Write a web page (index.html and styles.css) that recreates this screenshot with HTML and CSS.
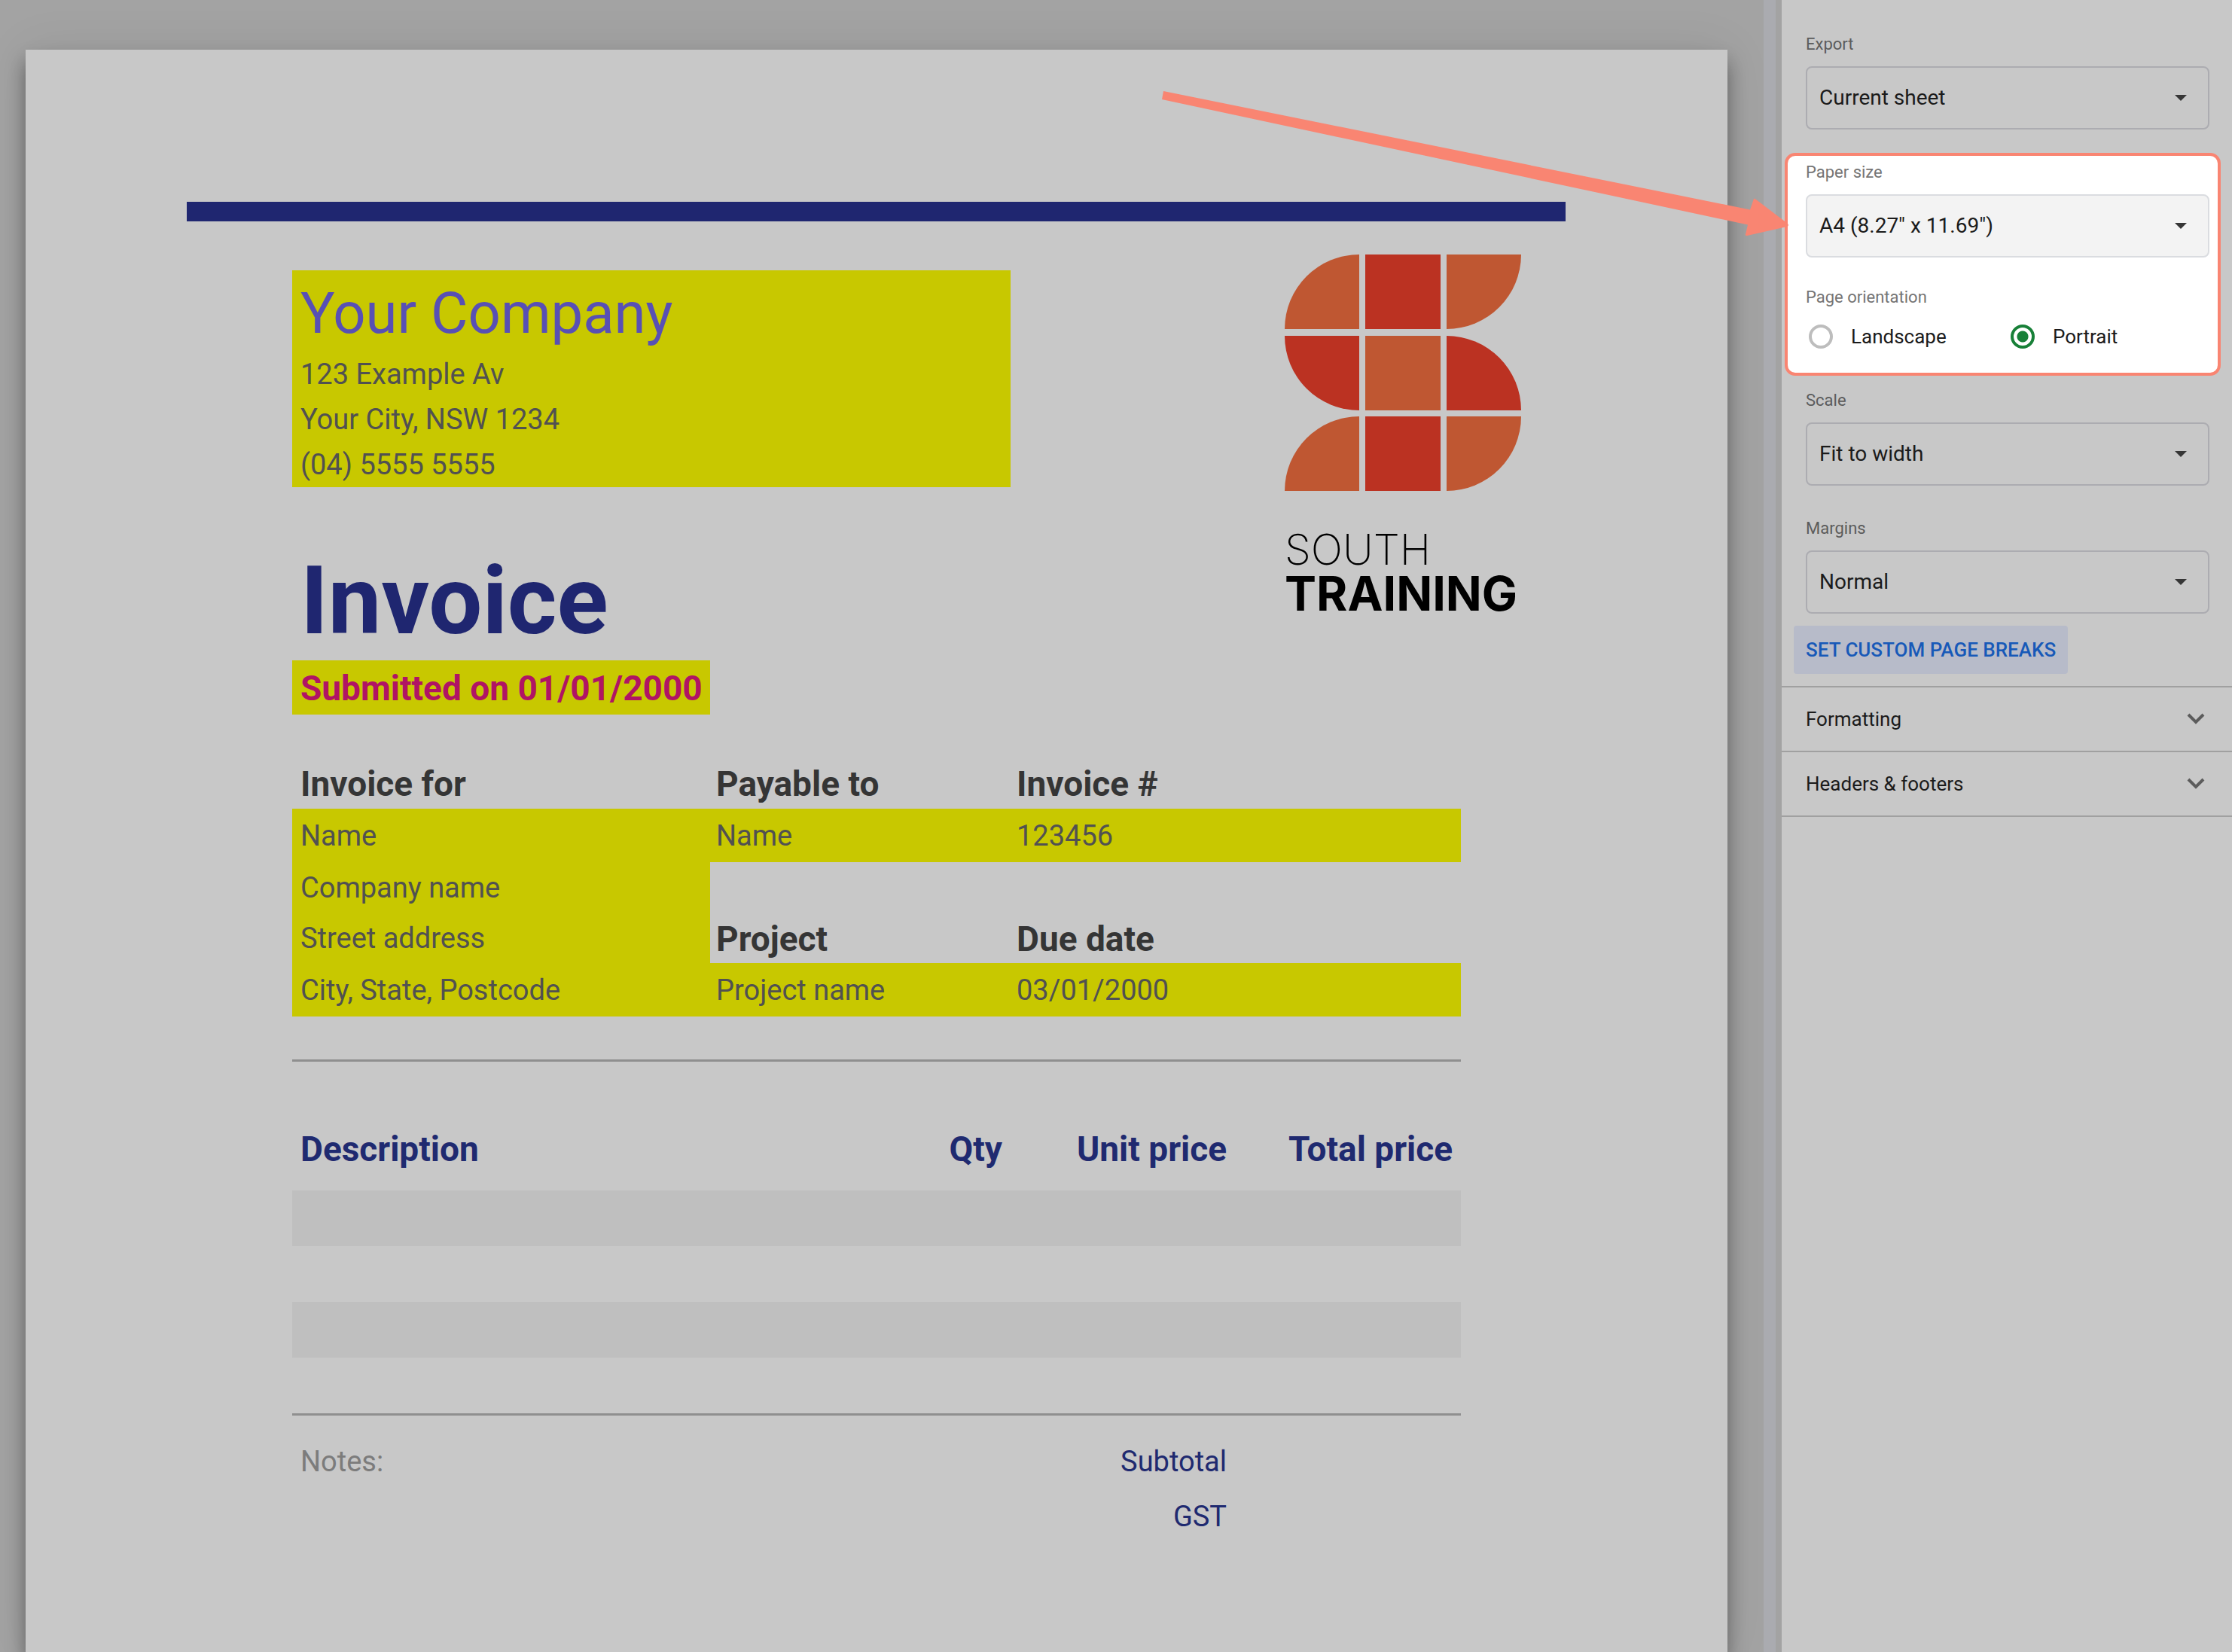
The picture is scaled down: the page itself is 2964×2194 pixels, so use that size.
FILE: index.html
```html
<!DOCTYPE html>
<html lang="en">
<head>
<meta charset="utf-8">
<title>Print settings</title>
<link rel="stylesheet" href="styles.css">
</head>
<body>
<div class="app">
  <main class="preview">
    <article class="sheet">
      <div class="sheet-bar"></div>
      <header class="sheet-head">
        <div class="head-text">
          <address class="company">
            <strong class="company-name">Your Company</strong>
            <span>123 Example Av</span>
            <span>Your City, NSW 1234</span>
            <span>(04) 5555 5555</span>
          </address>
          <h1 class="title">Invoice</h1>
          <p class="submitted">Submitted on 01/01/2000</p>
        </div>
        <div class="brand">
          <svg class="brand-mark" viewBox="0 0 314 314" aria-hidden="true">
            <g fill="#bf5732">
              <path d="M99 0V99H0A99 99 0 0 1 99 0Z"/>
              <path d="M215 0H314A99 99 0 0 1 215 99Z"/>
              <path d="M107 108H207V207H107Z"/>
              <path d="M99 215V314H0A99 99 0 0 1 99 215Z"/>
              <path d="M215 215H314A99 99 0 0 1 215 314Z"/>
            </g>
            <g fill="#bb3222">
              <path d="M107 0H207V99H107Z"/>
              <path d="M0 108H99V207A99 99 0 0 1 0 108Z"/>
              <path d="M215 108A99 99 0 0 1 314 207H215Z"/>
              <path d="M107 215H207V314H107Z"/>
            </g>
          </svg>
          <div class="brand-light">SOUTH</div>
          <div class="brand-bold">TRAINING</div>
        </div>
      </header>

      <div class="sheet-body">
        <table class="details">
          <colgroup><col class="col-a"><col class="col-b"><col></colgroup>
          <tr class="top"><th>Invoice for</th><th>Payable to</th><th>Invoice #</th></tr>
          <tr class="tall"><td class="mark">Name</td><td class="mark">Name</td><td class="mark">123456</td></tr>
          <tr><td class="mark">Company name</td><td></td><td></td></tr>
          <tr><td class="mark">Street address</td><th>Project</th><th>Due date</th></tr>
          <tr class="tall"><td class="mark">City, State, Postcode</td><td class="mark">Project name</td><td class="mark">03/01/2000</td></tr>
        </table>

        <table class="items">
          <colgroup><col class="col-a"><col class="col-b"><col class="col-c"><col></colgroup>
          <thead>
            <tr><th>Description</th><th>Qty</th><th>Unit price</th><th>Total price</th></tr>
          </thead>
          <tbody>
            <tr><td></td><td></td><td></td><td></td></tr>
            <tr><td></td><td></td><td></td><td></td></tr>
            <tr><td></td><td></td><td></td><td></td></tr>
            <tr><td></td><td></td><td></td><td></td></tr>
          </tbody>
          <tfoot>
            <tr class="first"><td class="notes">Notes:</td><td></td><td>Subtotal</td><td></td></tr>
            <tr><td></td><td></td><td>GST</td><td></td></tr>
          </tfoot>
        </table>
      </div>
    </article>
  </main>

  <div class="scroll-track"></div>

  <aside class="panel">
    <div class="field">
      <label class="caption" for="export">Export</label>
      <div class="select">
        <select id="export"><option>Current sheet</option></select>
        <svg class="caret" viewBox="0 0 16 8" aria-hidden="true"><path d="M0 0H16L8 8Z"/></svg>
      </div>
    </div>

    <div class="spotlight">
      <div class="field">
        <label class="caption" for="paper">Paper size</label>
        <div class="select filled">
          <select id="paper"><option>A4 (8.27" x 11.69")</option></select>
          <svg class="caret" viewBox="0 0 16 8" aria-hidden="true"><path d="M0 0H16L8 8Z"/></svg>
        </div>
      </div>
      <div class="orientation" role="radiogroup" aria-labelledby="orientation-caption">
        <div class="caption" id="orientation-caption">Page orientation</div>
        <div class="radios">
          <label class="radio"><input type="radio" name="orientation">Landscape</label>
          <label class="radio"><input type="radio" name="orientation" checked>Portrait</label>
        </div>
      </div>
      <svg class="pointer" viewBox="0 0 834 194" aria-hidden="true"><path d="M4 1L783 158.500L788 144Q789 143 791 145L833 177Q835 180 832 181L779 193Q776 193 777 191L780 178.500L2 12Z"/></svg>
    </div>

    <div class="field">
      <label class="caption" for="scale">Scale</label>
      <div class="select">
        <select id="scale"><option>Fit to width</option></select>
        <svg class="caret" viewBox="0 0 16 8" aria-hidden="true"><path d="M0 0H16L8 8Z"/></svg>
      </div>
    </div>

    <div class="field margins">
      <label class="caption" for="margins">Margins</label>
      <div class="select">
        <select id="margins"><option>Normal</option></select>
        <svg class="caret" viewBox="0 0 16 8" aria-hidden="true"><path d="M0 0H16L8 8Z"/></svg>
      </div>
    </div>

    <button class="breaks" type="button">SET CUSTOM PAGE BREAKS</button>

    <div class="sections">
      <button class="section" type="button">Formatting
        <svg class="chevron" viewBox="0 0 24 16" aria-hidden="true"><path d="M2 2L12 12L22 2"/></svg>
      </button>
      <button class="section" type="button">Headers &amp; footers
        <svg class="chevron" viewBox="0 0 24 16" aria-hidden="true"><path d="M2 2L12 12L22 2"/></svg>
      </button>
    </div>
  </aside>
</div>
</body>
</html>
```
FILE: styles.css
```css
* {
  box-sizing: border-box;
}

body {
  margin: 0;
  font-family: Roboto, "Liberation Sans", sans-serif;
  color: #1b1b1b;
  background: #a3a3a3;
}

.app {
  display: flex;
  min-height: 100vh;
}

/* Print preview */

.preview {
  display: flex;
  flex: 1;
  min-width: 0;
  padding: 66px 48px 0 34px;
  overflow: hidden;
}

.sheet {
  flex: 1;
  padding-top: 202px;
  background: #c8c8c8;
  box-shadow: 0 16px 24px rgba(0, 0, 0, 0.38), 0 0 60px rgba(0, 0, 0, 0.08);
}

.sheet-bar {
  height: 26px;
  margin: 0 215px 0 214px;
  background: #1f2670;
}

.sheet-head {
  display: flex;
  justify-content: space-between;
  align-items: flex-start;
  padding: 44px 272px 0 354px;
}

.head-text {
  padding-top: 21px;
}

.company {
  display: flex;
  flex-direction: column;
  width: 954px;
  padding: 6px 11px 0;
  font-size: 38px;
  font-style: normal;
  line-height: 60px;
  color: #515151;
  background: #c8c800;
}

.company-name {
  font-size: 76px;
  font-weight: 400;
  line-height: 102px;
  color: #5850b4;
}

.title {
  margin: 81px 0 9px;
  padding-left: 11px;
  font-size: 126px;
  line-height: 140px;
  color: #1f2670;
}

.submitted {
  width: 555px;
  margin: 0;
  padding: 2px 0 0 11px;
  font-size: 46px;
  font-weight: 700;
  line-height: 70px;
  color: #b01464;
  background: #c8c800;
}

.brand {
  width: 316px;
  font-family: Inter, "Liberation Sans", sans-serif;
  color: #000;
}

.brand-mark {
  display: block;
  width: 314px;
  height: 314px;
  margin-bottom: 48px;
}

.brand-light {
  font-size: 56px;
  font-weight: 200;
  line-height: 60px;
}

.brand-bold {
  font-size: 63px;
  font-weight: 700;
  line-height: 56px;
}

.sheet-body {
  padding: 57px 354px 0;
}

.details,
.items {
  width: 100%;
  border-spacing: 0;
  table-layout: fixed;
  font-size: 38px;
}

.col-a {
  width: 555px;
}

.col-b {
  width: 399px;
}

.col-c {
  width: 298px;
}

.details th,
.details td,
.items th,
.items td {
  padding: 0 11px;
  line-height: 60px;
  text-align: left;
}

.details tr {
  height: 67px;
}

.details tr.top {
  height: 68px;
}

.details tr.tall {
  height: 71px;
}

.details td {
  color: #515151;
}

.details th {
  padding-top: 2px;
  font-size: 46px;
  color: #353535;
}

.details th:nth-child(n+2),
.details td:nth-child(n+2) {
  padding-left: 8px;
}

.details .mark {
  background: #c8c800;
}

.items {
  margin-top: 57px;
  border-top: 3px solid #8f8f8f;
}

.items tr {
  height: 74px;
}

.items thead tr {
  height: 171px;
}

.items thead th {
  padding-top: 61px;
  font-size: 46px;
  color: #1f2a70;
}

.items th:nth-child(n+2),
.items td:nth-child(n+2) {
  text-align: right;
}

.items tbody tr:nth-child(odd) {
  background: #bfbfbf;
}

.items tfoot {
  color: #1f2a70;
}

.items tfoot .first {
  height: 100px;
}

.items tfoot .first td {
  padding-top: 24px;
  border-top: 3px solid #8f8f8f;
}

.items tfoot .notes {
  color: #7c7c7c;
}

.scroll-track {
  width: 16px;
  background: #aaabb0;
}

/* Settings panel */

.panel {
  width: 606px;
  padding-top: 45px;
  border-left: 8px solid #a3a3a3;
  background: #c8c8c8;
}

.field {
  margin: 0 30px 0 32px;
}

.caption {
  display: block;
  font-size: 22px;
  line-height: 28px;
  color: #5c5c5c;
}

.select {
  position: relative;
  margin-top: 15px;
}

.select select {
  display: block;
  width: 100%;
  height: 84px;
  padding: 0 48px 2px 16px;
  border: 2px solid #acacb1;
  border-radius: 8px;
  appearance: none;
  font: inherit;
  font-size: 28px;
  color: #1b1b1b;
  background: transparent;
}

.caret {
  position: absolute;
  top: 38px;
  right: 30px;
  width: 16px;
  height: 8px;
  fill: #363636;
  pointer-events: none;
}

.spotlight {
  position: relative;
  margin: 31px 15px 19px 4px;
  padding: 8px 11px 32px 24px;
  border: 4px solid #f98572;
  border-radius: 14px;
  background: #fff;
}

.spotlight .field {
  margin: 0;
}

.spotlight .caption {
  color: #757575;
}

.spotlight .select select {
  border-color: #dadce0;
  background: #f3f3f3;
}

.orientation {
  margin-top: 39px;
}

.radios {
  display: grid;
  grid-template-columns: 268px 1fr;
  padding: 22px 0 0 4px;
}

.radio {
  display: flex;
  align-items: center;
  gap: 24px;
  font-size: 26px;
  line-height: 32px;
}

.radio input {
  width: 32px;
  height: 32px;
  margin: 0;
  border: 4px solid #bdbdbd;
  border-radius: 50%;
  appearance: none;
}

.radio input:checked {
  border-color: #188038;
  background: radial-gradient(circle, #188038 7px, transparent 8px);
}

/* Callout arrow, lying over the preview and ending at the spotlight */
.pointer {
  position: absolute;
  top: -87px;
  right: 570px;
  width: 834px;
  height: 194px;
  fill: #f98572;
}

.margins {
  margin-top: 43px;
}

.breaks {
  display: block;
  height: 64px;
  margin: 16px;
  padding: 0 16px;
  border: 0;
  border-radius: 4px;
  font: inherit;
  font-size: 26px;
  font-weight: 500;
  color: #1759b8;
  background: #b7bbc9;
}

.sections {
  border-top: 2px solid #a0a0a0;
}

.section {
  display: flex;
  align-items: center;
  justify-content: space-between;
  width: 100%;
  height: 86px;
  padding: 0 36px 0 32px;
  border: 0;
  border-bottom: 2px solid #a0a0a0;
  font: inherit;
  font-size: 26px;
  color: #1b1b1b;
  background: transparent;
}

.chevron {
  width: 24px;
  height: 16px;
  fill: none;
  stroke: #5c5c5c;
  stroke-width: 4;
}
```
